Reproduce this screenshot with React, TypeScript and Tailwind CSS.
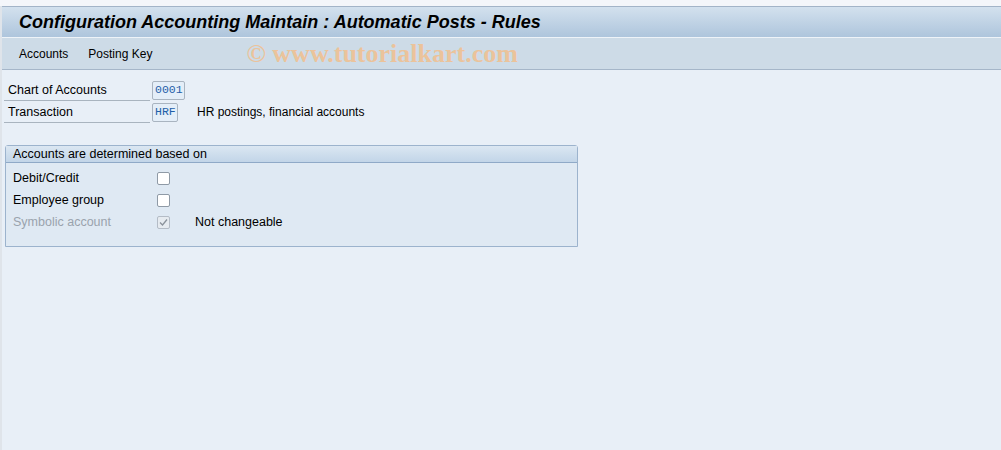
import React from "react";

const font = { fontFamily: '"Liberation Sans", Arial, sans-serif' };

function Checkbox({ checked, disabled }: { checked?: boolean; disabled?: boolean }) {
  return (
    <div
      className={
        "flex h-[13px] w-[13px] items-center justify-center rounded-[2px] border " +
        (disabled ? "border-[#b4bcc6] bg-[#e6ebf0]" : "border-[#8f9aa6] bg-white")
      }
    >
      {checked ? (
        <svg width="9" height="9" viewBox="0 0 9 9">
          <path d="M1 4.5 L3.5 7 L8 1.5" fill="none" stroke="#8a929b" strokeWidth="1.3" />
        </svg>
      ) : null}
    </div>
  );
}

function FieldRow({ label, value, inputWidth, desc }: { label: string; value: string; inputWidth: string; desc?: string }) {
  return (
    <div className="flex h-[22px] items-center">
      <div className="flex h-full w-[146px] items-center border-b border-[#a9b4bf] pl-[4px] pt-[1px] text-[12.5px] text-black">
        {label}
      </div>
      <div
        className={
          "ml-[2px] flex h-[19px] items-center overflow-hidden rounded-[2px] border border-[#a9b4c0] bg-[#e4eef8] px-[2px] text-[11.5px] text-[#1f5ea8] " +
          inputWidth
        }
        style={{ fontFamily: '"Liberation Mono", "Courier New", monospace' }}
      >
        {value}
      </div>
      {desc ? <div className="ml-[19px] text-[12px] text-black">{desc}</div> : null}
    </div>
  );
}

export default function App() {
  return (
    <div className="h-[450px] w-[1001px] overflow-hidden bg-[#f4f6fa]" style={font}>
      <div className="h-[6px]" />
      <div className="flex h-[444px] flex-col border-l-2 border-[#dfe4ea] bg-[#e8eff7]">
        <div className="flex h-[31px] items-center border-t border-[#a3b4c8] bg-gradient-to-b from-[#d3e1ee] to-[#aec5dc] pl-[17px]">
          <span className="text-[18px] font-bold italic text-black">
            Configuration Accounting Maintain : Automatic Posts - Rules
          </span>
        </div>
        <div className="flex h-[33px] items-center border-t border-[#eef3f8] border-b border-b-[#a5b6c9] bg-[#cddbe7] pl-[17px] text-[12px] text-black">
          <span>Accounts</span>
          <span className="ml-[20px]">Posting Key</span>
          <span
            className="ml-[94px] text-[26px] font-bold text-[#ebc39b]"
            style={{ fontFamily: '"Liberation Serif", "Times New Roman", serif' }}
          >
            © www.tutorialkart.com
          </span>
        </div>
        <div className="flex flex-col pl-[2px] pt-[9px]">
          <FieldRow label="Chart of Accounts" value="0001" inputWidth="w-[33px]" />
          <FieldRow label="Transaction" value="HRF" inputWidth="w-[26px]" desc="HR postings, financial accounts" />
        </div>
        <div className="ml-[3px] mt-[22px] h-[102px] w-[573px] rounded-t-[3px] border border-[#9cb3cd] bg-[#dfe9f3]">
          <div className="flex h-[17px] items-center border-b border-[#8fa9c7] bg-gradient-to-b from-[#dbe7f2] to-[#c2d5e8] pl-[7px] text-[12.5px] text-black">
            Accounts are determined based on
          </div>
          <div className="flex flex-col pt-[4px] text-[12.5px]">
            <div className="flex h-[22px] items-center">
              <span className="w-[151px] pl-[7px] text-black">Debit/Credit</span>
              <Checkbox />
            </div>
            <div className="flex h-[22px] items-center">
              <span className="w-[151px] pl-[7px] text-black">Employee group</span>
              <Checkbox />
            </div>
            <div className="flex h-[22px] items-center">
              <span className="w-[151px] pl-[7px] text-[#9aa3ad]">Symbolic account</span>
              <Checkbox checked disabled />
              <span className="ml-[25px] text-black">Not changeable</span>
            </div>
          </div>
        </div>
      </div>
    </div>
  );
}
